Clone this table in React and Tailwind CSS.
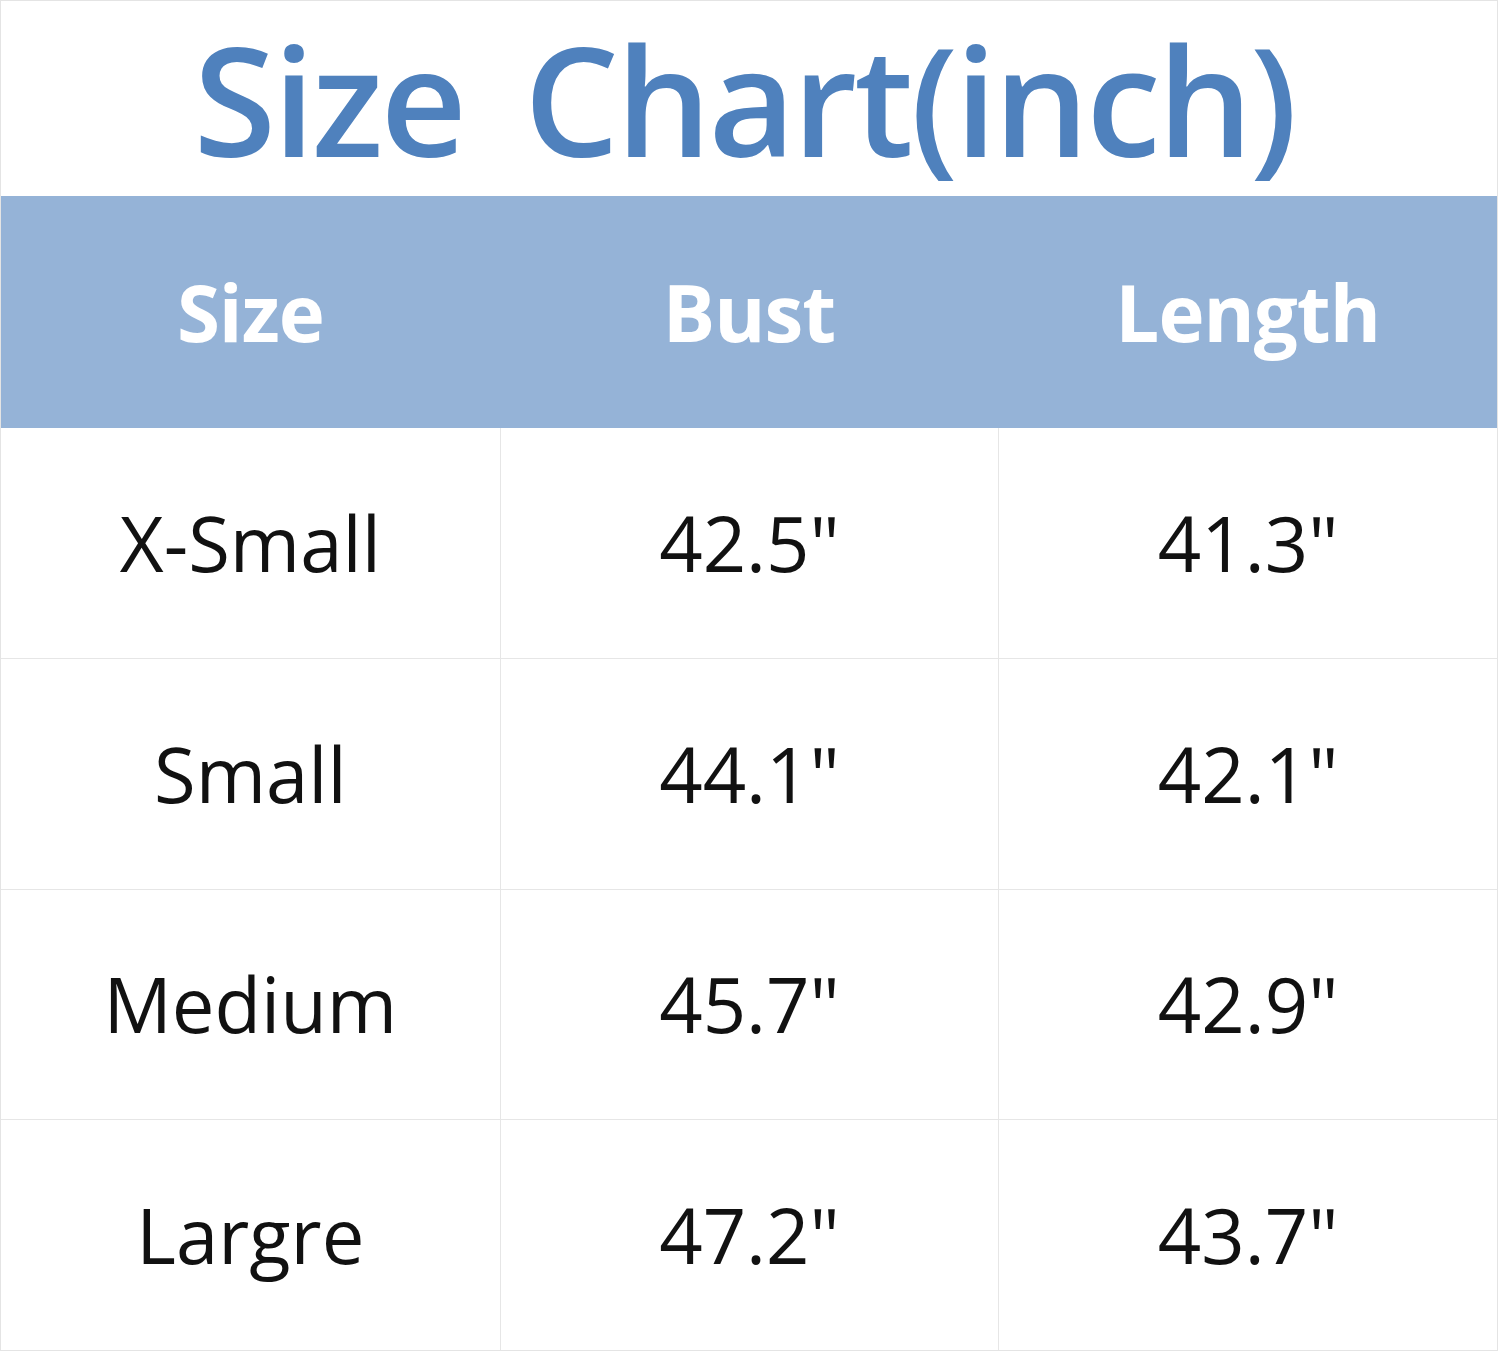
const rows = [
  ["X-Small", '42.5"', '41.3"'],
  ["Small", '44.1"', '42.1"'],
  ["Medium", '45.7"', '42.9"'],
  ["Largre", '47.2"', '43.7"'],
];

function App() {
  return (
    <div className="h-[1353px] w-[1500px] bg-white font-['Open_Sans',sans-serif]">
      <div className="flex h-[1351px] w-[1498px] flex-col border border-[#e4e4e4]">
        <div className="flex h-[195px] items-center justify-center pr-[10px]">
          <h1 className="flex gap-[56px] text-[150px] font-semibold leading-[1.2] tracking-[-3px] text-[#4f81bd]">
            <span className="px-[2px]">Size</span>
            <span className="px-[2px]">Chart(inch)</span>
          </h1>
        </div>

        <div className="grid h-[232px] grid-cols-3 bg-[#95b3d7]">
          {["Size", "Bust", "Length"].map((h) => (
            <div
              key={h}
              className="flex items-center justify-center text-[78px] font-bold tracking-[-1px] text-white"
            >
              {h}
            </div>
          ))}
        </div>

        {rows.map((r, i) => (
          <div
            key={r[0]}
            className={`grid flex-1 grid-cols-3 ${i > 0 ? "border-t border-[#e6e6e6]" : ""}`}
          >
            {r.map((c, j) => (
              <div
                key={j}
                className={`flex items-center justify-center text-[76px] text-[#111] ${j > 0 ? "border-l border-[#e6e6e6]" : ""}`}
              >
                {c}
              </div>
            ))}
          </div>
        ))}
      </div>
    </div>
  );
}

export default App;
